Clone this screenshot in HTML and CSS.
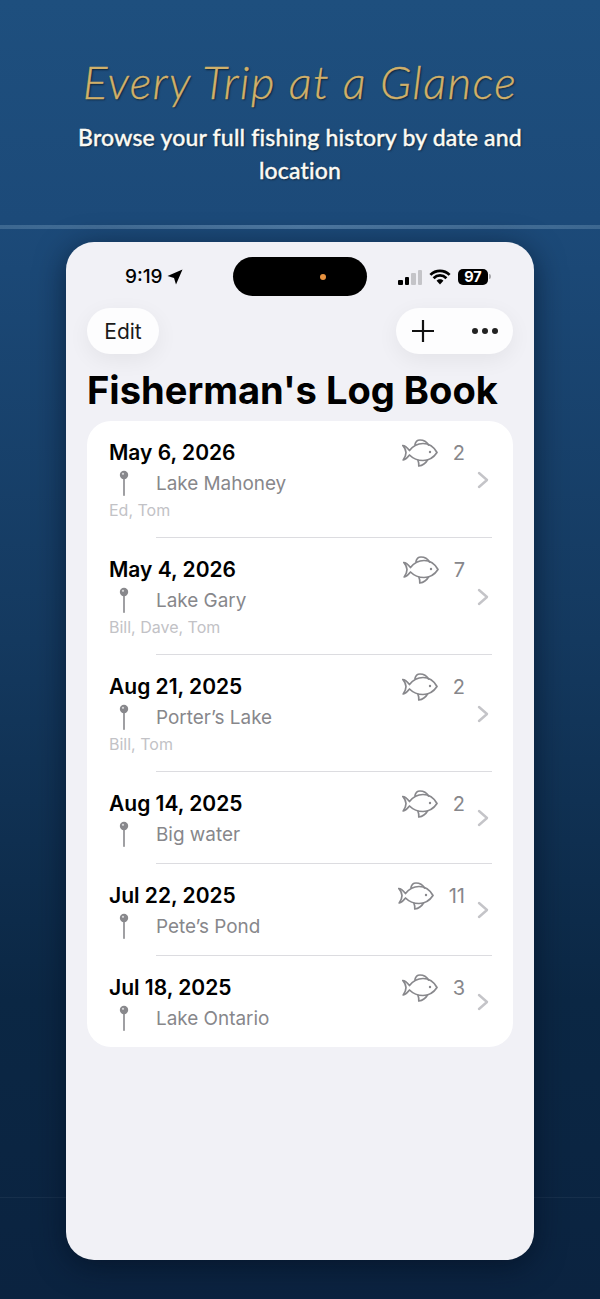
FILE: index.html
```html
<!DOCTYPE html>
<html>
  <head>
    <meta charset="utf-8">
    <title>Fisherman's Log Book</title>
    <link rel="stylesheet" href="styles.css">
  </head>
  <body>
    <svg class="defs" width="0" height="0">
      <symbol id="fish" viewBox="0 0 36 28">
        <path d="M0.800 6.500C3 6.500 5.500 9 7.500 11.500C11 7 16 4.500 21 4.500C27 4.500 32 8 35 13.500C32 18 27 21.500 21 21.500C16 21.500 11 19.500 7.500 16C5.500 18.500 3.500 20.500 1.200 21C3 18.500 4 16 4 13.500C4 11 2.500 8.500 0.800 6.500Z"/>
        <path d="M13 5.500C13.500 3 15.500 1 18 1C21.500 1 24.500 2.500 26.500 6"/>
        <path d="M16 21.500C16.800 23.500 17 25.500 16.800 27C20 26.500 23.500 24.500 25.500 21"/>
        <circle class="eye" cx="28" cy="13" r="1.200"/>
      </symbol>
      <symbol id="pin" viewBox="0 0 10 26">
        <rect class="needle" x="4.200" y="8" width="1.600" height="18" rx="0.800"/>
        <circle class="head" cx="5" cy="5" r="4.200"/>
        <circle class="shine" cx="4" cy="3.800" r="1.100"/>
      </symbol>
      <symbol id="chevron" viewBox="0 0 12 18">
        <path d="M2 2L10 9L2 16"/>
      </symbol>
    </svg>

    <header class="hero">
      <h1>Every Trip at a Glance</h1>
      <p>Browse your full fishing history by date and location</p>
    </header>
    <div class="rule"></div>

    <main class="phone">
      <div class="status">
        <div class="status-left">
          <span>9:19</span>
          <svg class="arrow" viewBox="0 0 16 16"><path d="M15.500 0.500L9 15.500L7 9L0.500 7Z"/></svg>
        </div>
        <div class="island"><i></i></div>
        <div class="status-right">
          <span class="bars"><i></i><i></i><i class="off"></i><i class="off"></i></span>
          <svg class="wifi" viewBox="0 0 20 15">
            <path d="M10 14.500L6.800 11C8.600 9.300 11.400 9.300 13.200 11Z"/>
            <path d="M1 5.500C6 0.500 14 0.500 19 5.500M4 8.600C7.500 5.200 12.500 5.200 16 8.600"/>
          </svg>
          <span class="battery">97</span>
          <span class="nub"></span>
        </div>
      </div>

      <div class="toolbar">
        <button class="pill edit">Edit</button>
        <div class="pill actions">
          <svg class="plus" viewBox="0 0 24 24"><path d="M12 1V23M1 12H23"/></svg>
          <span class="dots"><i></i><i></i><i></i></span>
        </div>
      </div>

      <h2>Fisherman's Log Book</h2>

      <ul class="trips">
        <li class="trip tall">
          <div class="info">
            <div class="date">May 6, 2026</div>
            <div class="place"><svg class="pin"><use href="#pin"/></svg>Lake Mahoney</div>
            <div class="crew">Ed, Tom</div>
          </div>
          <div class="count"><svg class="fish"><use href="#fish"/></svg><span>2</span></div>
          <svg class="chev"><use href="#chevron"/></svg>
        </li>
        <li class="trip tall">
          <div class="info">
            <div class="date">May 4, 2026</div>
            <div class="place"><svg class="pin"><use href="#pin"/></svg>Lake Gary</div>
            <div class="crew">Bill, Dave, Tom</div>
          </div>
          <div class="count"><svg class="fish"><use href="#fish"/></svg><span>7</span></div>
          <svg class="chev"><use href="#chevron"/></svg>
        </li>
        <li class="trip tall">
          <div class="info">
            <div class="date">Aug 21, 2025</div>
            <div class="place"><svg class="pin"><use href="#pin"/></svg>Porter’s Lake</div>
            <div class="crew">Bill, Tom</div>
          </div>
          <div class="count"><svg class="fish"><use href="#fish"/></svg><span>2</span></div>
          <svg class="chev"><use href="#chevron"/></svg>
        </li>
        <li class="trip">
          <div class="info">
            <div class="date">Aug 14, 2025</div>
            <div class="place"><svg class="pin"><use href="#pin"/></svg>Big water</div>
          </div>
          <div class="count"><svg class="fish"><use href="#fish"/></svg><span>2</span></div>
          <svg class="chev"><use href="#chevron"/></svg>
        </li>
        <li class="trip">
          <div class="info">
            <div class="date">Jul 22, 2025</div>
            <div class="place"><svg class="pin"><use href="#pin"/></svg>Pete’s Pond</div>
          </div>
          <div class="count"><svg class="fish"><use href="#fish"/></svg><span>11</span></div>
          <svg class="chev"><use href="#chevron"/></svg>
        </li>
        <li class="trip">
          <div class="info">
            <div class="date">Jul 18, 2025</div>
            <div class="place"><svg class="pin"><use href="#pin"/></svg>Lake Ontario</div>
          </div>
          <div class="count"><svg class="fish"><use href="#fish"/></svg><span>3</span></div>
          <svg class="chev"><use href="#chevron"/></svg>
        </li>
      </ul>
    </main>
  </body>
</html>
```

FILE: styles.css
```css
* {
  box-sizing: border-box;
}
html, body {
  margin: 0;
  height: 1299px;
  overflow: hidden;
}
body {
  width: 600px;
  background:
    linear-gradient(rgba(255, 255, 255, 0.05), rgba(255, 255, 255, 0.05)) 0 1197px / 100% 1px no-repeat,
    linear-gradient(#1e4f7e 0, #1c4a79 220px, #14395f 640px, #0b2744 1000px, #0b2340 1299px);
  font-family: Inter, "Liberation Sans", sans-serif;
}
.defs {
  display: block;
  height: 0;
}

/* hero */
.hero {
  height: 225px;
  padding-top: 55px;
  text-align: center;
}
.hero h1 {
  margin: 0;
  font-family: Lato, "Open Sans", sans-serif;
  font-size: 46px;
  font-weight: 300;
  font-style: italic;
  line-height: 54px;
  letter-spacing: 1.300px;
  color: #d0b06a;
  -webkit-text-stroke: 0.3px #d0b06a;
  text-shadow: 1px 1px 2px rgba(0, 0, 0, 0.6);
  white-space: nowrap;
}
.hero p {
  margin: 0 auto;
  width: 480px;
  padding-top: 12px;
  font-family: Lato, "Open Sans", sans-serif;
  font-size: 23px;
  font-weight: 500;
  line-height: 33px;
  letter-spacing: 0.180px;
  color: #fbfaf4;
  -webkit-text-stroke: 0.35px #fbfaf4;
  text-shadow: 1px 1px 2px rgba(0, 0, 0, 0.5);
}
.rule {
  height: 4px;
  background: linear-gradient(90deg, #3c6790, #4f7aa3 50%, #3c6790);
}

/* phone */
.phone {
  width: 468px;
  height: 1018px;
  margin: 13px 0 0 66px;
  padding: 0 21px;
  background: #f1f1f6;
  border-radius: 28px;
  box-shadow: 0 6px 30px rgba(4, 14, 30, 0.6);
}
.status {
  display: flex;
  align-items: center;
  height: 66px;
  padding-top: 3px;
  color: #000;
}
.status-left {
  display: flex;
  align-items: center;
  gap: 4px;
  width: 146px;
  padding-left: 38px;
  font-size: 19px;
  font-weight: 500;
}
.arrow {
  width: 16px;
  height: 16px;
  fill: #000;
}
.island {
  display: flex;
  align-items: center;
  width: 134px;
  height: 39px;
  padding-left: 87px;
  border-radius: 20px;
  background: #000;
}
.island i {
  width: 6px;
  height: 6px;
  border-radius: 50%;
  background: #e8923f;
}
.status-right {
  display: flex;
  align-items: center;
  padding-left: 31px;
}
.bars {
  display: flex;
  align-items: flex-end;
  gap: 2px;
  height: 16px;
}
.bars i {
  width: 4.500px;
  border-radius: 1px;
  background: #000;
}
.bars i:nth-child(1) { height: 5px; }
.bars i:nth-child(2) { height: 8px; }
.bars i:nth-child(3) { height: 12px; }
.bars i:nth-child(4) { height: 15px; }
.bars i.off {
  background: #c4c4c8;
}
.wifi {
  width: 22px;
  height: 16px;
  margin-left: 7px;
}
.wifi path:first-child {
  fill: #000;
}
.wifi path:last-child {
  fill: none;
  stroke: #000;
  stroke-width: 2.600;
}
.battery {
  width: 30px;
  height: 16px;
  margin-left: 7px;
  border-radius: 5px;
  background: #000;
  color: #fff;
  font-size: 14.500px;
  font-weight: 700;
  line-height: 16px;
  text-align: center;
}
.nub {
  width: 2px;
  height: 5px;
  margin-left: 1px;
  border-radius: 0 2px 2px 0;
  background: #a8a8ac;
}

/* toolbar */
.toolbar {
  display: flex;
  justify-content: space-between;
  height: 46px;
}
.pill {
  height: 46px;
  border: 0;
  border-radius: 23px;
  background: #fdfdfe;
  box-shadow: 0 6px 22px rgba(0, 0, 0, 0.06);
}
.edit {
  width: 72px;
  padding: 0;
  font-family: Inter, "Liberation Sans", sans-serif;
  font-size: 21px;
  color: #1a1a1a;
}
.actions {
  display: flex;
  align-items: center;
  width: 117px;
  padding-left: 15px;
}
.plus {
  width: 24px;
  height: 24px;
  fill: none;
  stroke: #111;
  stroke-width: 2.200;
}
.dots {
  display: flex;
  gap: 4px;
  margin-left: 37px;
}
.dots i {
  width: 6px;
  height: 6px;
  border-radius: 50%;
  background: #222;
}
.phone h2 {
  margin: 0;
  height: 67px;
  padding-top: 11px;
  font-size: 38.100px;
  font-weight: 700;
  line-height: 50px;
  color: #000;
  white-space: nowrap;
}

/* list */
.trips {
  margin: 0;
  padding: 0;
  list-style: none;
  background: #fff;
  border-radius: 24px;
}
.trip {
  position: relative;
  display: flex;
  height: 92px;
  padding: 18px 22px 0;
}
.trip.tall {
  height: 117px;
}
.trip:last-child {
  height: 91px;
}
.trip + .trip::before {
  content: "";
  position: absolute;
  top: -1px;
  left: 69px;
  right: 21px;
  height: 1px;
  background: #dcdce0;
}
.info {
  flex: 1;
}
.date {
  font-size: 21px;
  font-weight: 600;
  line-height: 28px;
  color: #000;
}
.place {
  display: flex;
  align-items: center;
  height: 30px;
  margin-top: 2px;
  font-size: 18.900px;
  line-height: 30px;
  color: #87878b;
}
.pin {
  width: 10px;
  height: 26px;
  margin: -2px 27px 0 10px;
}
.head, .needle {
  fill: #88888c;
}
.shine {
  fill: #d8d8da;
}
.crew {
  font-size: 16px;
  line-height: 22px;
  color: #c2c2c6;
}
.count {
  display: flex;
  align-items: center;
  justify-content: flex-end;
  height: 28px;
  margin-right: 26px;
  font-size: 20px;
  color: #87878b;
}
.fish {
  width: 36px;
  height: 28px;
  margin-right: 15px;
  fill: none;
  stroke: #88888c;
  stroke-width: 1.700;
  stroke-linejoin: round;
  stroke-linecap: round;
}
.eye {
  fill: #88888c;
  stroke: none;
}
.chev {
  position: absolute;
  top: 50%;
  right: 24px;
  width: 12px;
  height: 18px;
  margin-top: -9px;
  fill: none;
  stroke: #c4c4c8;
  stroke-width: 2.400;
  stroke-linecap: round;
  stroke-linejoin: round;
}
```
